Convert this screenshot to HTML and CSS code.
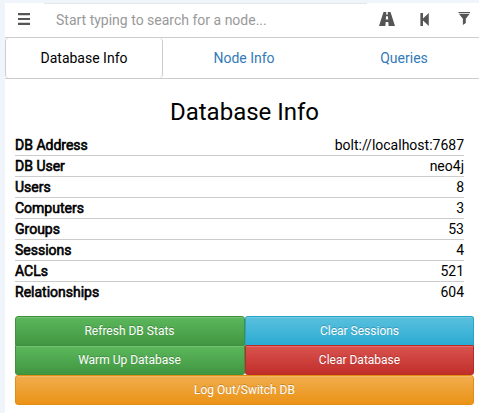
FILE: index.html
```html
<!DOCTYPE html>
<html lang="en">
<head>
<meta charset="utf-8">
<title>Database Info</title>
<link rel="stylesheet" href="styles.css">
</head>
<body>
<main class="panel">
  <header class="search">
    <button class="icon menu" aria-label="Menu"><svg width="12" height="12" viewBox="0 0 12 12"><path d="M0 0h12v2.2H0zM0 5h12v2H0zM0 9.8h12V12H0z"/></svg></button>
    <input class="query" type="text" placeholder="Start typing to search for a node...">
    <button class="icon road" aria-label="Pathfinding"><svg width="16" height="14" viewBox="0 0 16 14"><path fill-rule="evenodd" d="M4.5 0H7.3L7.1 2.5H8.9L8.7 0H11.5L16 14H9.6L9.3 10H6.7L6.4 14H0zM7 4.3L6.8 7.6H9.2L9 4.3z"/></svg></button>
    <button class="icon back" aria-label="Back"><svg width="9" height="13" viewBox="0 0 9 13"><path d="M0.4 0h2.6v5.4L8.8 0v13L3 7.6V13H0.4z"/></svg></button>
    <button class="icon filter" aria-label="Filter"><svg width="12" height="13" viewBox="0 0 12 13"><path d="M0.5 0h11.5v1H0.5zM0.9 1.8h10.8L7.8 6.7V11L4.9 13V6.7z"/></svg></button>
  </header>
  <nav class="tabs">
    <a class="tab active">Database Info</a>
    <a class="tab">Node Info</a>
    <a class="tab">Queries</a>
  </nav>
  <section class="content">
    <h3>Database Info</h3>
    <dl class="stats">
      <div><dt>DB Address</dt><dd>bolt://localhost:7687</dd></div>
      <div><dt>DB User</dt><dd>neo4j</dd></div>
      <div><dt>Users</dt><dd>8</dd></div>
      <div><dt>Computers</dt><dd>3</dd></div>
      <div><dt>Groups</dt><dd>53</dd></div>
      <div><dt>Sessions</dt><dd>4</dd></div>
      <div><dt>ACLs</dt><dd>521</dd></div>
      <div><dt>Relationships</dt><dd>604</dd></div>
    </dl>
    <div class="actions">
      <button class="btn success top">Refresh DB Stats</button>
      <button class="btn info top">Clear Sessions</button>
      <button class="btn success bottom">Warm Up Database</button>
      <button class="btn danger bottom">Clear Database</button>
      <button class="btn warning">Log Out/Switch DB</button>
    </div>
  </section>
</main>
</body>
</html>
```
FILE: styles.css
```css
* { box-sizing: border-box; }
body {
  margin: 0;
  padding: 3px 0 0 5px;
  height: 413px;
  overflow: hidden;
  background: #f0f4fb;
  color: #000;
  font: 14px/20px Roboto, sans-serif;
}
button, input { font: inherit; border: 0; padding: 0; margin: 0; background: none; }
.panel { height: 410px; background: #fff; }
.search { display: flex; height: 34px; }
.icon { display: flex; justify-content: center; align-items: center; height: 32px; color: #555; }
.icon svg { fill: currentColor; }
.menu { width: 39px; padding-right: 1px; }
.query {
  flex: 1;
  min-width: 0;
  padding: 0 0 1px 12px;
  height: 33px;
  border-top: 1px solid #e5e6e9;
  outline: 0;
}
.query::placeholder { color: #999; opacity: 1; }
.road { width: 39px; }
.back { width: 38px; padding: 1px 1px 0 0; }
.filter { width: 35px; padding: 0 0 1px 5px; }
.tabs { display: flex; height: 42px; border: solid #ccc; border-width: 1px 0; }
.tab {
  flex: 0 0 160px;
  line-height: 40px;
  text-align: center;
  color: #337ab7;
}
.tab.active {
  flex-basis: 158px;
  margin-right: 1px;
  border: solid #ccc;
  border-width: 0 1px;
  border-radius: 4px;
  color: #000;
}
.content { padding: 18px 5px 0 10px; }
h3 { margin: 0; font-size: 24px; font-weight: 400; line-height: 30px; text-align: center; }
.stats { margin: 8px 10px 0 0; }
.stats div { display: flex; justify-content: space-between; height: 21px; border-bottom: 1px solid #ccc; }
.stats div:last-child { border-bottom: 0; }
dt { -webkit-text-stroke: .6px #000; }
dd { margin: 0; }
.actions { display: grid; grid-template-columns: 230px 229px; grid-template-rows: 30px 29px 30px; margin-top: 13px; }
.btn {
  border: 1px solid;
  border-radius: 3px;
  color: #fff;
  font-size: 12px;
  line-height: 18px;
  text-shadow: 0 -1px 0 rgba(0, 0, 0, .2);
  box-shadow: inset 0 1px 0 rgba(255, 255, 255, .15);
}
.top { border-radius: 3px 3px 0 0; }
.bottom { border-radius: 0 0 3px 3px; border-top-width: 0; }
.success { padding-right: 1px; background: linear-gradient(#5cb85c, #419641); border-color: #3e8f3e; }
.info { background: linear-gradient(#5bc0de, #2aabd2); border-color: #28a4c9; border-bottom-color: #b92c28; }
.danger { background: linear-gradient(#d9534f, #c12e2a); border-color: #b92c28; }
.warning { grid-column: 1 / -1; background: linear-gradient(#f0ad4e, #eb9316); border-color: #e38d13; }
```
